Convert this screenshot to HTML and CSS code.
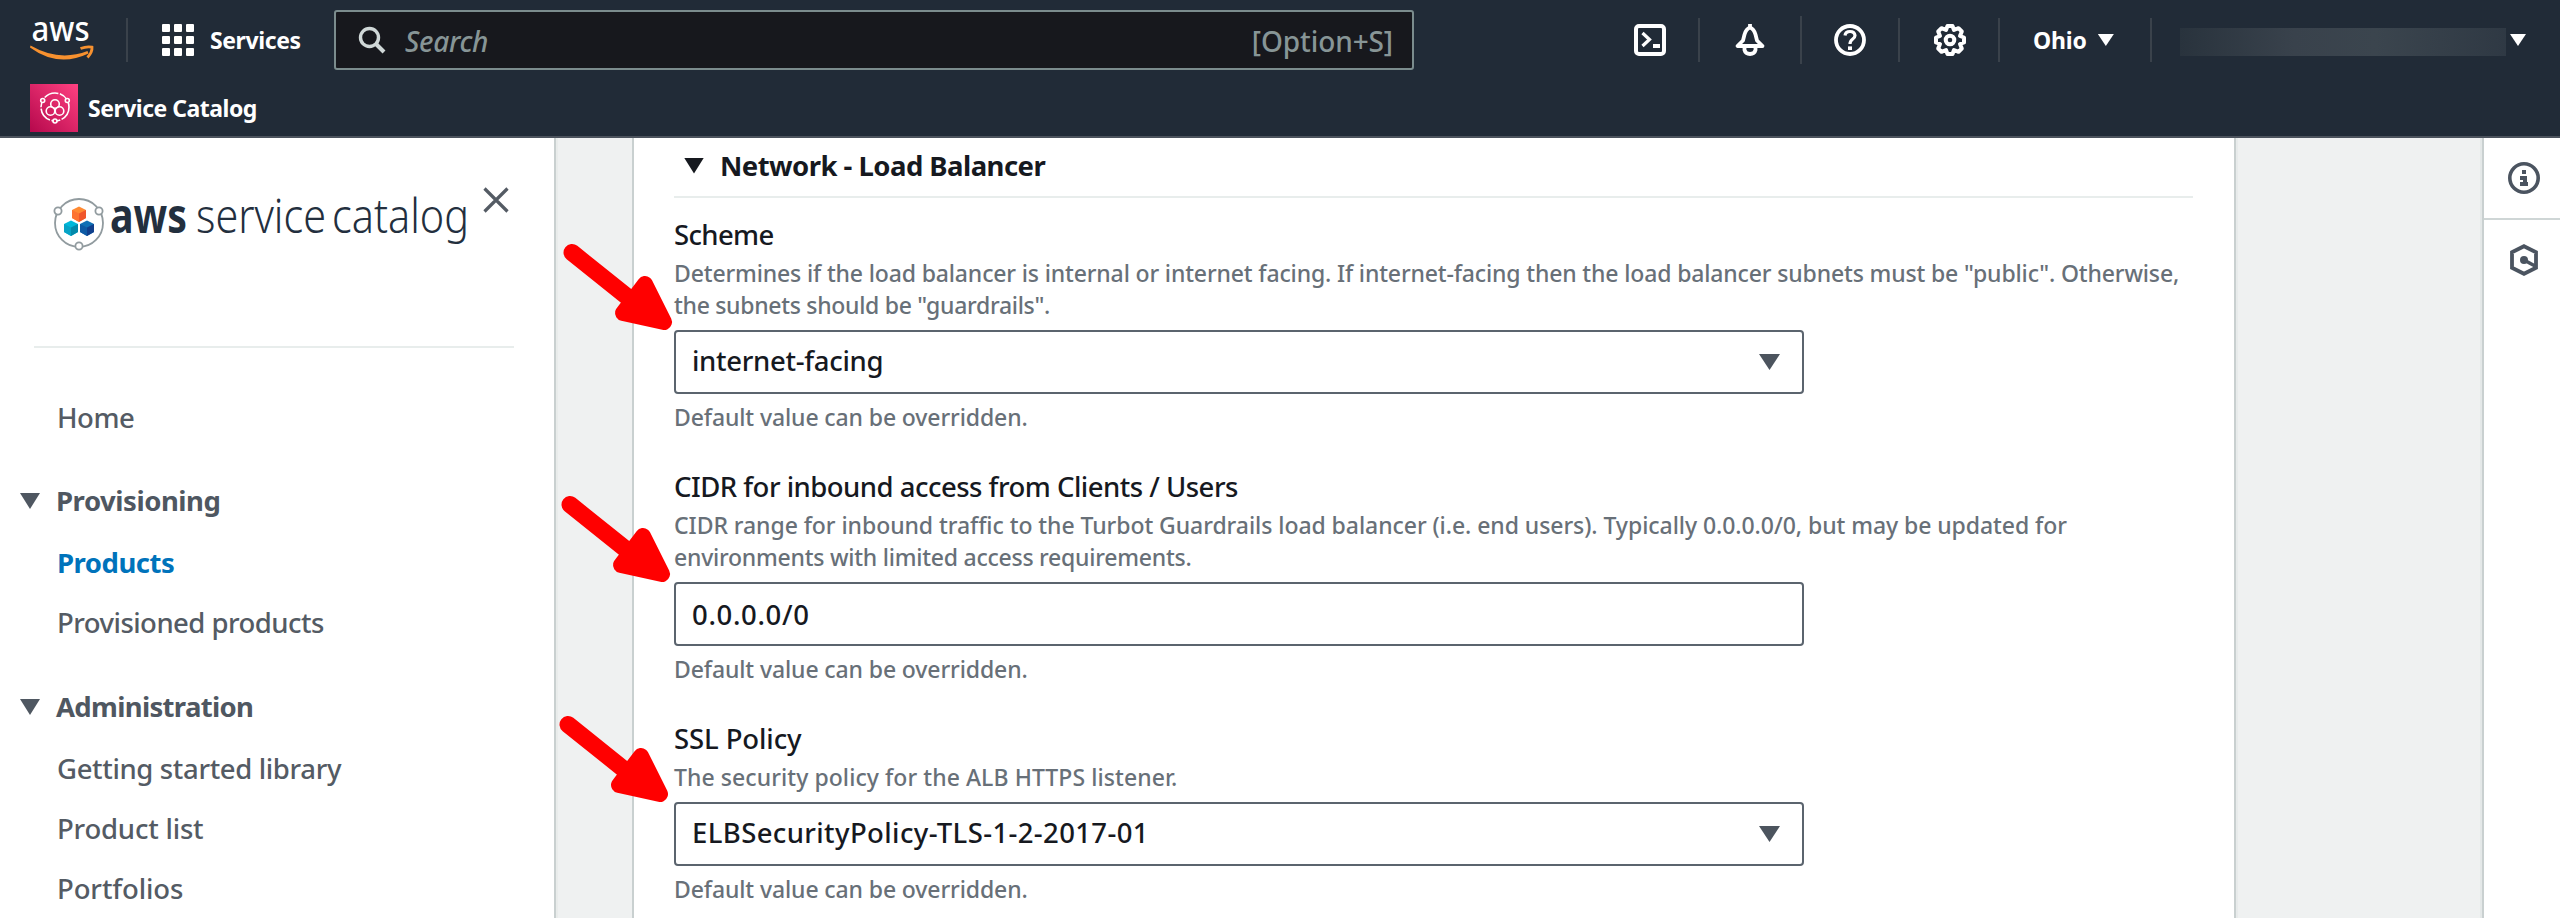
FILE: index.html
```html
<!DOCTYPE html>
<html lang="en">
<head>
<meta charset="utf-8">
<title>Service Catalog</title>
<link rel="stylesheet" href="styles.css">
</head>
<body>
<header class="topbar">
  <div class="topbar-main">
    <svg class="aws-logo" viewBox="0 0 64 44" width="64" height="44">
      <text x="1.5" y="21.5" class="aws-word" textLength="58" lengthAdjust="spacingAndGlyphs">aws</text>
      <path d="M0.5 26.5 Q29 43 57.5 32 L58.500 34.500 Q28 49 0 28.500 Z" fill="#f7912f"/>
      <path d="M50.5 29.5 Q57 27 62 28.2 Q62.500 33 57.500 38.500" fill="none" stroke="#f7912f" stroke-width="2.800"/>
    </svg>
    <span class="vline after-logo"></span>
    <div class="grid-icon"><i></i><i></i><i></i><i></i><i></i><i></i><i></i><i></i><i></i></div>
    <span class="nav-text services">Services</span>
    <div class="search">
      <svg class="search-icon" viewBox="0 0 28 28" width="28" height="28"><circle cx="11.500" cy="11.500" r="9" fill="none" stroke="#d0d8d8" stroke-width="3.400"/><path d="M18 18l8 8" stroke="#d0d8d8" stroke-width="4"/></svg>
      <span class="search-label">Search</span>
      <span class="search-key">[Option+S]</span>
    </div>
    <div class="tools">
      <div class="tool">
        <svg viewBox="0 0 32 32" width="32" height="32" fill="none" stroke="#fff"><rect x="2" y="2" width="28" height="28" rx="3" stroke-width="4"/><path d="M8.500 9l7 6.500-7 6.500" stroke-width="3.200"/><path d="M19 22h7" stroke-width="4"/></svg>
      </div>
      <span class="vline"></span>
      <div class="tool">
        <svg viewBox="0 0 32 32" width="32" height="32" fill="none" stroke="#fff" stroke-width="3.800"><path d="M3.500 22h25L23 16.500l-1.500-6Q20 5 16 3.500 12 5 10.500 10.500L9 16.500z" stroke-linejoin="round"/><path d="M16 0v4"/><path d="M10.500 23v3q1 4 5.500 4t5.500-4v-3"/></svg>
      </div>
      <span class="vline tall"></span>
      <div class="tool">
        <svg viewBox="0 0 32 32" width="32" height="32" fill="none" stroke="#fff"><circle cx="16" cy="16" r="14" stroke-width="3.800"/><path d="M11 11.500q.5-4 5-4t5 4q0 2-2.500 3.800T16 20" stroke-width="3.200"/><path d="M14 24.200h4" stroke-width="3.600"/></svg>
      </div>
      <span class="vline"></span>
      <div class="tool">
        <svg viewBox="0 0 32 32" width="32" height="32" fill="none" stroke="#fff" stroke-width="4"><path d="M13.500 2h5l1.500 4 4.500-1.800 3.300 3.300L26 12l4 1.500v5L26 20l1.800 4.500-3.300 3.300L20 26l-1.500 4h-5L12 26l-4.500 1.800-3.300-3.300L6 20l-4-1.500v-5L6 12 4.200 7.500l3.300-3.300L12 6z" stroke-linejoin="round"/><circle cx="16" cy="16" r="4.300"/></svg>
      </div>
      <span class="vline"></span>
      <div class="region"><span class="nav-text ohio">Ohio</span><span class="tri tri-nav"></span></div>
      <span class="vline"></span>
      <div class="account"><span class="redacted"></span><span class="tri tri-nav"></span></div>
    </div>
  </div>
  <div class="topbar-sub">
    <svg viewBox="0 0 48 48" width="48" height="48">
      <defs><linearGradient id="pink" x1="0" y1="1" x2="1" y2="0"><stop offset="0" stop-color="#b5084c"/><stop offset="1" stop-color="#ff4181"/></linearGradient></defs>
      <rect width="48" height="48" fill="url(#pink)"/>
      <g fill="none" stroke="#fff" stroke-width="1.600">
        <circle cx="25" cy="23" r="14" stroke-dasharray="15 1.500 9 1.500"/>
        <circle cx="25" cy="20" r="4.300"/><circle cx="20.500" cy="27" r="4.300"/><circle cx="29.500" cy="27" r="4.300"/>
      </g>
      <g fill="#e12c6a" stroke="#fff" stroke-width="1.600"><circle cx="12.700" cy="16.500" r="2"/><circle cx="37.300" cy="16.500" r="2"/><circle cx="25" cy="37" r="2"/></g>
    </svg>
    <span class="nav-text catalog">Service Catalog</span>
  </div>
</header>

<div class="shell">
  <nav class="sidebar">
    <div class="brand">
      <svg class="brand-logo" viewBox="0 0 420 60" width="420" height="60">
        <circle cx="25" cy="25" r="24" fill="none" stroke="#919b9f" stroke-width="1.800"/>
        <g fill="#fff" stroke="#919b9f" stroke-width="1.800"><circle cx="4" cy="13" r="3.600"/><circle cx="45" cy="13" r="3.600"/><circle cx="25" cy="48" r="3.600"/></g>
        <path d="M25 8.500l7 3.500v8l-7 4-7-4v-8z" fill="#ff8a33"/><path d="M25 15.500l7-3.500v8l-7 4z" fill="#f0562b"/><path d="M18 12l7 3.500v8.500l-7-4z" fill="#fd7331"/>
        <path d="M17 22.500l7 3.500v8l-7 4-7-4v-8z" fill="#00b8da"/><path d="M17 29.500l7-3.500v8l-7 4z" fill="#0389ab"/><path d="M10 26l7 3.500v8.500l-7-4z" fill="#06a3c6"/>
        <path d="M33 22.500l7 3.500v8l-7 4-7-4v-8z" fill="#1070b5"/><path d="M33 29.500l7-3.500v8l-7 4z" fill="#103f8c"/><path d="M26 26l7 3.500v8.500l-7-4z" fill="#0e5aa4"/>
        <text class="brand-bold" x="56" y="34.5" textLength="77" lengthAdjust="spacingAndGlyphs">aws</text>
        <text class="brand-light" x="142" y="34.5" textLength="130" lengthAdjust="spacingAndGlyphs">service</text>
        <text class="brand-light" x="278" y="34.5" textLength="137" lengthAdjust="spacingAndGlyphs">catalog</text>
      </svg>
      <svg class="close" viewBox="0 0 26 26" width="26" height="26"><path d="M1.500 1.500l23 23M24.500 1.500l-23 23" stroke="#545b64" stroke-width="3.200"/></svg>
    </div>
    <div class="nav-rule"></div>
    <a class="link home">Home</a>
    <div class="group g1"><span class="tri tri-side"></span><span class="group-name provisioning">Provisioning</span></div>
    <a class="link active">Products</a>
    <a class="link provd">Provisioned products</a>
    <div class="group g2"><span class="tri tri-side"></span><span class="group-name administration">Administration</span></div>
    <a class="link first started">Getting started library</a>
    <a class="link list">Product list</a>
    <a class="link folios">Portfolios</a>
  </nav>

  <main class="content">
    <section class="card">
      <h2 class="section-head"><span class="tri tri-head"></span><span class="head-text">Network - Load Balancer</span></h2>

      <div class="field">
        <div class="label scheme">Scheme</div>
        <div class="desc">Determines if the load balancer is internal or internet facing. If internet-facing then the load balancer subnets must be "public". Otherwise,<br><span class="tight">the subnets should be "guardrails".</span></div>
        <div class="control select"><span class="value facing">internet-facing</span><span class="tri tri-select"></span></div>
        <div class="hint">Default value can be overridden.</div>
      </div>

      <div class="field">
        <div class="label cidr">CIDR for inbound access from Clients / Users</div>
        <div class="desc cidr-desc">CIDR range for inbound traffic to the Turbot Guardrails load balancer (i.e. end users). Typically 0.0.0.0/0, but may be updated for<br><span class="env">environments with limited access requirements.</span></div>
        <div class="control input"><span class="value ip">0.0.0.0/0</span></div>
        <div class="hint">Default value can be overridden.</div>
      </div>

      <div class="field">
        <div class="label ssl">SSL Policy</div>
        <div class="desc ssl-desc">The security policy for the ALB HTTPS listener.</div>
        <div class="control select"><span class="value elb">ELBSecurityPolicy-TLS-1-2-2017-01</span><span class="tri tri-select"></span></div>
        <div class="hint">Default value can be overridden.</div>
      </div>
    </section>
  </main>

  <aside class="rail">
    <div class="rail-item">
      <svg viewBox="0 0 32 32" width="32" height="32" fill="none" stroke="#4b5460"><circle cx="16" cy="16" r="14.200" stroke-width="3.600"/><path d="M14 10h4M12 16h5v6M12 22h8" stroke-width="4"/></svg>
    </div>
    <div class="rail-item last">
      <svg viewBox="0 0 32 32" width="32" height="32" fill="none" stroke="#4b5460"><path d="M16 2.200l12 6v15.600l-12 6-12-6V8.200z" stroke-width="3.800"/><circle cx="16" cy="16" r="4" fill="#4b5460" stroke="none"/><path d="M16 16l11 6" stroke-width="3.600"/></svg>
    </div>
  </aside>
</div>

<!-- Callout arrows laid over the form -->
<svg class="arrows" viewBox="0 0 2560 918" width="2560" height="918">
  <defs>
    <g id="arrow">
      <path d="M572 252.500L640 307" stroke="#f00" stroke-width="17" stroke-linecap="round"/>
      <path d="M645 284L664 322 623 313z" fill="#f00" stroke="#f00" stroke-width="16" stroke-linejoin="round"/>
    </g>
  </defs>
  <use href="#arrow"/>
  <use href="#arrow" x="-2" y="252"/>
  <use href="#arrow" x="-4" y="472"/>
</svg>
</body>
</html>
```
FILE: styles.css
```css
* { box-sizing: border-box; }
body { margin: 0; height: 918px; overflow: hidden; background: #fff; font-family: "Noto Sans", "Open Sans", sans-serif; color: #16191f; display: flex; flex-direction: column; }
svg { display: block; flex: none; }
span, a { white-space: nowrap; }

/* Top bar */
.topbar { flex: none; height: 138px; background: #212b37; border-bottom: 2px solid #4c535d; }
.topbar-main { height: 80px; display: flex; align-items: center; padding-left: 30px; }
.topbar-sub { height: 56px; display: flex; align-items: center; padding-left: 30px; gap: 10px; }
.aws-logo { overflow: visible; margin-top: 2px; }
.aws-word { font-size: 34.5px; fill: #fff; font-weight: 500; }
.vline { flex: none; width: 2px; height: 44px; background: #3a424b; }
.vline.tall { height: 48px; }
.after-logo { margin-left: 32px; }
.grid-icon { display: grid; grid-template-columns: repeat(3, 8px); gap: 4px; margin-left: 34px; }
.grid-icon i { height: 8px; background: #fff; border-radius: 1px; }
.nav-text { font-size: 23px; line-height: 32px; font-weight: 700; color: #fff; }
.services { margin: -1px 0 0 16px; width: 124px; letter-spacing: -.4px; }
.catalog { letter-spacing: -.5px; margin-top: -1px; }
.ohio { letter-spacing: -.14px; margin-top: -1px; }
.search { width: 1080px; height: 60px; flex: none; display: flex; align-items: center; padding: 0 19px 0 22px; background: #17181d; border: 2px solid #7b8c8d; border-radius: 3px; }
.search-label { font-size: 28px; font-style: italic; font-weight: 500; color: #879596; letter-spacing: -.3px; margin: 2px 0 0 19px; }
.search-key { font-size: 28px; font-weight: 500; color: #879596; margin: 2px 0 0 auto; letter-spacing: -.1px; }
.tools { flex: 1; display: flex; align-items: center; padding-left: 220px; }
.tool { flex: none; padding: 0 34px 0 34px; }
.tool:first-child { padding: 0 32px 0 0; }
.tool:nth-child(5) { padding: 0 32px; }
.tool:nth-child(7) { padding: 0 32px 0 34px; }
.region { width: 150px; display: flex; align-items: center; padding-left: 33px; gap: 11px; }
.account { display: flex; align-items: center; padding-left: 28px; gap: 4px; }
.redacted { width: 326px; height: 28px; margin-top: 4px; background: linear-gradient(90deg, #29333d, #39424c 35%, #3b454e 60%, #2f3944); }

/* Downward triangles */
.tri { flex: none; background: currentColor; clip-path: polygon(0 0, 100% 0, 50% 100%); }
.tri-nav { width: 16px; height: 12px; color: #fff; }
.tri-side { width: 20px; height: 16px; color: #4f5761; }
.tri-head { width: 20px; height: 16px; }
.tri-select { width: 21px; height: 16px; color: #4c545e; }

.shell { flex: 1; display: flex; min-height: 0; }

/* Navigation */
.sidebar { flex: none; width: 556px; border-right: 2px solid #c9d0d0; overflow: hidden; }
.brand { display: flex; padding: 60px 0 0 54px; height: 208px; }
.brand-logo { overflow: visible; }
.close { margin: -11px 0 0 9px; }
.nav-rule { height: 2px; margin: 0 40px 50px 34px; background: #e8edec; }
.link, .group { display: flex; align-items: center; height: 40px; font-size: 27.5px; line-height: 40px; color: #545b64; font-weight: 500; }
.link { margin: 0 0 20px 57px; }
.home { margin-bottom: 0; letter-spacing: -.47px; }
.group { padding-left: 20px; gap: 16px; font-weight: 700; color: #4f5761; margin-bottom: 22px; }
.g1 { margin-top: 43px; }
.g2 { margin-top: 44px; }
.provisioning { letter-spacing: -.46px; }
.administration { letter-spacing: -.68px; }
.active { font-weight: 700; color: #0073bb; letter-spacing: -.48px; }
.provd { margin-bottom: 0; letter-spacing: -.53px; }
.started { letter-spacing: -.36px; }
.list { letter-spacing: -.21px; }
.folios { letter-spacing: -.11px; }
.link:last-child { margin-bottom: 0; }
.brand-bold { font-size: 48px; font-weight: 700; fill: #232f3e; }
.brand-light { font-size: 48px; font-weight: 300; fill: #232f3e; }

/* Form */
.content { flex: 1; background: #eff1f1; padding-left: 74px; border-left: 2px solid #e9eceb; border-right: 2px solid #e4e8e8; }
.card { width: 1604px; height: 100%; background: #fff; border: 2px solid #c9d0d0; border-width: 0 2px; padding: 0 41px 0 40px; box-shadow: 2px 0 0 #e8ebeb; }
.section-head { margin: 0 0 17px; height: 60px; border-bottom: 2px solid #e8edec; display: flex; align-items: center; padding: 0 0 3px 10px; gap: 16px; font-size: 27.5px; line-height: 54px; font-weight: 700; }
.head-text { letter-spacing: -.54px; }
.field { height: 252px; }
.field:last-child { height: 220px; }
.label { font-size: 27.5px; line-height: 40px; font-weight: 500; white-space: nowrap; }
.scheme { letter-spacing: -.64px; }
.cidr { letter-spacing: -.51px; }
.ssl { letter-spacing: -.11px; }
.desc { font-size: 23px; line-height: 32px; font-weight: 500; color: #687078; margin: 2px 0 0; white-space: nowrap; letter-spacing: -.145px; }
.tight { letter-spacing: -.3px; }
.cidr-desc { letter-spacing: -.06px; }
.env { letter-spacing: -.24px; }
.ssl-desc { letter-spacing: .07px; }
.control { width: 1130px; height: 64px; margin: 9px 0 7px; border: 2px solid #5b646e; border-radius: 4px; display: flex; align-items: center; padding: 0 22px 0 16px; font-size: 27.5px; line-height: 40px; font-weight: 500; }
.select { justify-content: space-between; }
.select .value { margin-top: -2px; }
.input .value { margin-top: 2px; }
.facing { letter-spacing: -.3px; }
.ip { letter-spacing: .65px; }
.elb { letter-spacing: .38px; }
.hint { font-size: 23px; line-height: 32px; font-weight: 500; color: #687078; letter-spacing: -.11px; }

/* Right rail */
.rail { flex: none; width: 78px; border-left: 2px solid #c9d0d0; }
.rail-item { height: 82px; padding: 24px 0 0 24px; border-bottom: 2px solid #cfd6d6; }
.rail-item.last { border: 0; }

.arrows { position: absolute; left: 0; top: 0; pointer-events: none; }
```
